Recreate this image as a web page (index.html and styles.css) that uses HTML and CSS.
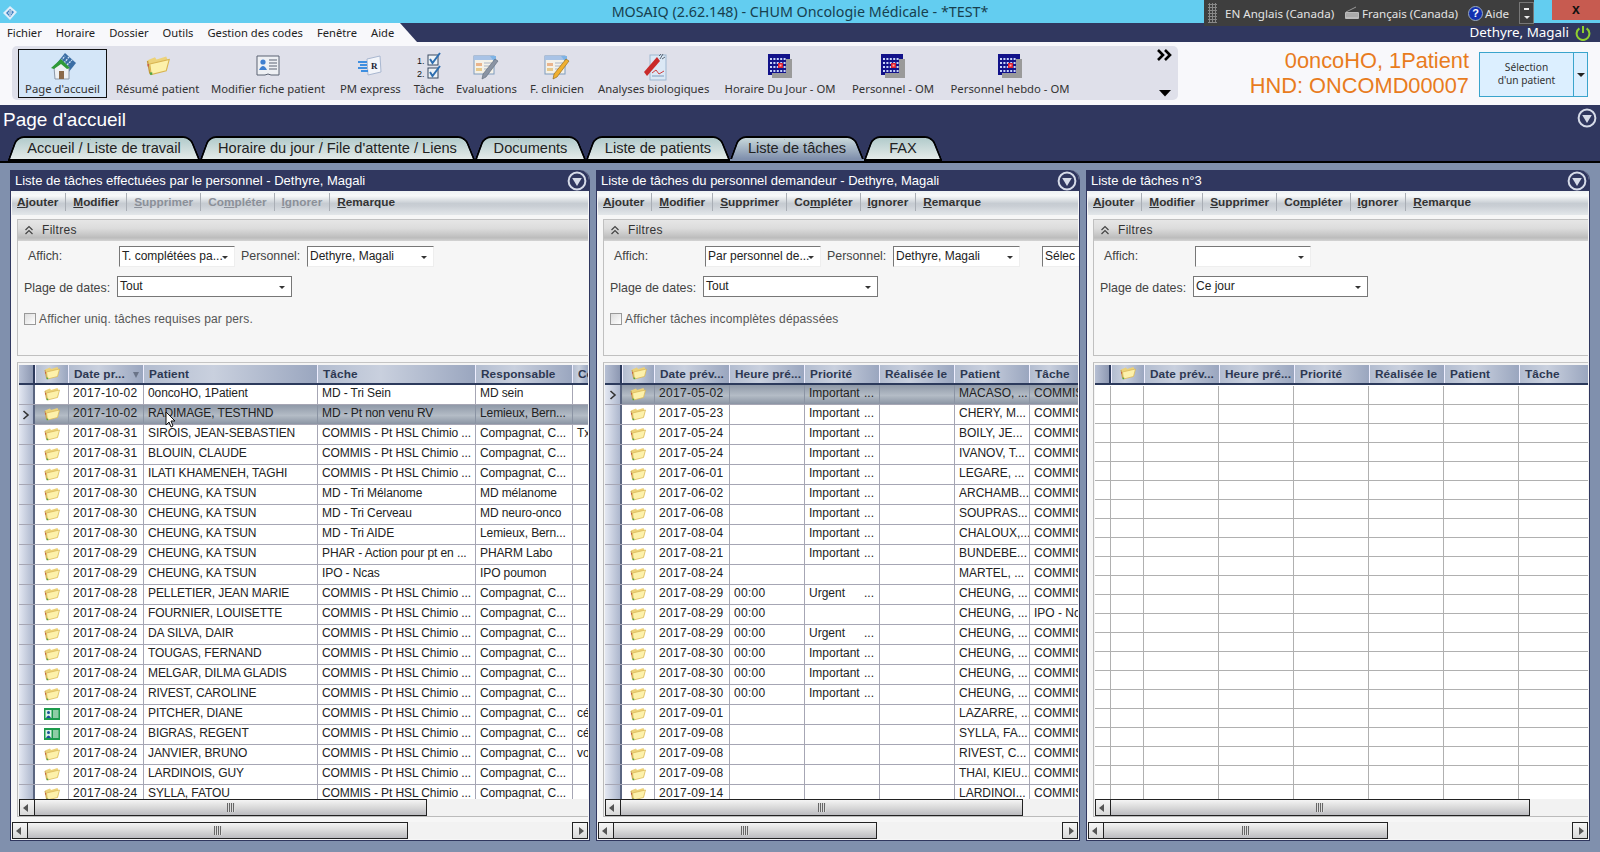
FILE: index.html
```html
<!DOCTYPE html>
<html lang="fr">
<head>
<meta charset="utf-8">
<title>MOSAIQ</title>
<link rel="stylesheet" href="styles.css">
</head>
<body>
<svg class="defs" width="0" height="0" aria-hidden="true">
  <symbol id="folder" viewBox="0 0 16 14">
    <path d="M1 3.5 L6 1.5 L7 3 L13.5 1 L14.5 3.5 L14 10 L3 13 Z" fill="#ecd27a"/>
    <path d="M2.5 6 L15.5 3 L13.5 10.5 L3.5 13 Z" fill="#fdf1ab" stroke="#d8b452" stroke-width=".7"/>
    <path d="M1 4 L2.6 12.5" stroke="#c49a3c" stroke-width=".9"/>
    <rect x="2.6" y="11.6" width="1.6" height="1.6" fill="#4ea545"/>
    <rect x="1" y="6" width="1" height="1.6" fill="#c8604a"/>
  </symbol>
  <symbol id="card" viewBox="0 0 16 12">
    <rect width="16" height="12" fill="#1c9a4c"/>
    <rect x="1.5" y="2" width="6" height="8" fill="#d9f3e3"/>
    <circle cx="4.5" cy="4.4" r="1.5" fill="#1b4d9a"/>
    <path d="M2 10 Q4.5 5 7 10 Z" fill="#1b4d9a"/>
    <path d="M9 3 H14.5 M9 5 H14.5 M9 7 H14.5 M9 9 H14.5" stroke="#fff" stroke-width="1"/>
  </symbol>
  <symbol id="cal" viewBox="0 0 26 26">
    <rect x="1" y="1" width="22" height="21" fill="#12128a"/>
    <rect x="19" y="6" width="6" height="19" fill="#9a9a9a"/>
    <rect x="5" y="20" width="20" height="5" fill="#9a9a9a"/>
    <path d="M3 6 h17 M3 10 h17 M3 14 h17 M3 18 h17" stroke="#c8d4f8" stroke-width="2" stroke-dasharray="2 1.4"/>
    <rect x="11" y="10" width="5" height="5" fill="#e02030"/>
    <rect x="12.5" y="11.5" width="2" height="2" fill="#ffb0a0"/>
  </symbol>
  <symbol id="round" viewBox="0 0 20 20">
    <circle cx="10" cy="10" r="8.4" fill="none" stroke="#d6dbe8" stroke-width="2"/>
    <path d="M5.2 7 H14.8 L10 15 Z" fill="#d6dbe8"/>
  </symbol>
  <symbol id="sheet" viewBox="0 0 28 28">
    <rect x="2" y="4" width="20" height="18" fill="#f4f1e8" stroke="#7f9bbd"/>
    <rect x="2" y="4" width="20" height="4" fill="#a9c3e6"/>
    <path d="M4 11 h6 v3 h-6 z" fill="#eab48c"/>
    <path d="M4 16 h6 v3 h-6 z" fill="#e6c98c"/>
    <path d="M12 11 h8 M12 14 h8 M12 17 h8" stroke="#a9b4c5"/>
    <path d="M18 4 h6 v8 z" fill="#7fb4e6"/>
  </symbol>
</svg>

<header class="titlebar">
  <svg class="app-ico" width="18" height="18" viewBox="0 0 18 18"><path d="M2 9 L9 2 L16 8 L9 16 Z" fill="#dfeefa"/><path d="M5 9 L9 5 L13 8 L9 13 Z" fill="#3f7fc0"/><path d="M7 9 h4 M8 7 h3 M8 11 h2" stroke="#fff"/></svg>
  <div class="app-title">MOSAIQ (2.62.148) - CHUM Oncologie Médicale - *TEST*</div>
  <div class="winctl">
    <span class="restore"></span>
    <span class="close">x</span>
  </div>
  <div class="langbar">
    <span class="grip"></span>
    <span class="lang l1">EN Anglais (Canada)</span>
    <svg class="kb" width="16" height="14" viewBox="0 0 16 14"><path d="M2 6 L12 1" stroke="#999" fill="none"/><rect x="1" y="6" width="14" height="7" rx="1" fill="#bbb"/><path d="M2.5 8 h11 M2.5 10 h11" stroke="#777" stroke-dasharray="1 1"/></svg>
    <span class="lang l2">Français (Canada)</span>
    <span class="help">?</span>
    <span class="lang">Aide</span>
    <span class="lbmin"><i></i><b></b></span>
  </div>
</header>

<nav class="navbar">
  <ul class="menu">
    <li>Fichier</li><li>Horaire</li><li>Dossier</li><li>Outils</li><li>Gestion des codes</li><li>Fenêtre</li><li>Aide</li>
  </ul>
  <div class="user">
    <span>Dethyre, Magali</span>
    <svg width="16" height="16" viewBox="0 0 16 16"><path d="M4.4 3.4 A6.4 6.4 0 1 0 11.6 3.4" fill="none" stroke="#8fd02f" stroke-width="2"/><path d="M8 1 V8" stroke="#8fd02f" stroke-width="2"/></svg>
  </div>
</nav>

<section class="ribbon">
  <div class="tools">
    <div class="tool active">
      <svg width="30" height="30" viewBox="0 0 30 30"><path d="M9 12 L17 2 L28 12 L20 22 Z" fill="#3b6ea5"/><path d="M13 10 L17 5 M16 12 L21 6 M19 14 L24 9" stroke="#cfe2f5" stroke-width="1.4" stroke-dasharray="2 1"/><path d="M6 16 L13 9 L21 16 V28 H7 Z" fill="#eef1f4" stroke="#8b98a8"/><path d="M3 17 L13 8 L22 17 L19 18 L13 13 L6 18 Z" fill="#2f9a38"/><rect x="11" y="20" width="5" height="8" fill="#8b6a4a"/></svg>
      <span>Page d'accueil</span>
    </div>
    <div class="tool t-res">
      <svg width="24" height="21" viewBox="0 0 16 14"><use href="#folder"/></svg>
      <span>Résumé patient</span>
    </div>
    <div class="tool t-mod">
      <svg width="26" height="26" viewBox="0 0 26 26"><path d="M2 3 H24 V22 H16 Q13 20 10 22 H2 Z" fill="#eef0f4" stroke="#5a6272"/><circle cx="8" cy="9" r="2.6" fill="#3f7fd0"/><path d="M4 17 Q8 9 12 17 Z" fill="#3f7fd0"/><path d="M14 7 H22 M14 10 H22 M14 13 H22 M14 16 H22" stroke="#5a6272"/></svg>
      <span>Modifier fiche patient</span>
    </div>
    <div class="tool t-pm">
      <svg width="26" height="26" viewBox="0 0 26 26"><path d="M10 6 L23 3 L24 19 L11 22 Z" fill="#f3f5fa" stroke="#a9b7d0"/><path d="M1 9 H10 M3 12 H10 M1 15 H10 M4 18 H11" stroke="#3f8fe0" stroke-width="2"/><text x="14" y="16" class="rx">R</text></svg>
      <span>PM express</span>
    </div>
    <div class="tool t-tache">
      <svg width="26" height="30" viewBox="0 0 26 30"><text x="1" y="13" class="num">1.</text><text x="1" y="26" class="num">2.</text><rect x="12" y="4" width="10" height="10" fill="#eef3f7" stroke="#3a4a60"/><rect x="12" y="17" width="10" height="10" fill="#eef3f7" stroke="#3a4a60"/><path d="M14 8 L16.5 12 L24 2" fill="none" stroke="#2f6fb0" stroke-width="2"/><path d="M14 21 L16.5 25 L24 15" fill="none" stroke="#2f6fb0" stroke-width="2"/></svg>
      <span>Tâche</span>
    </div>
    <div class="tool t-eval">
      <svg width="28" height="28" viewBox="0 0 28 28"><use href="#sheet"/><path d="M26 9 L14 25 L10 27 L11 22 L23 7 Z" fill="#8a94a4" stroke="#5c6675" stroke-width=".6"/></svg>
      <span>Evaluations</span>
    </div>
    <div class="tool t-fcl">
      <svg width="28" height="28" viewBox="0 0 28 28"><use href="#sheet"/><path d="M26 9 L14 25 L10 27 L11 22 L23 7 Z" fill="#f0b030" stroke="#8a6010" stroke-width=".6"/></svg>
      <span>F. clinicien</span>
    </div>
    <div class="tool t-ana">
      <svg width="30" height="30" viewBox="0 0 30 30"><rect x="11" y="4" width="16" height="25" fill="#dbe8f5" stroke="#9fb7d0"/><path d="M13 22 L17 19 L20 23 L25 20" stroke="#d04040" fill="none"/><path d="M13 25 H25" stroke="#7f9bbd"/><path d="M18 6 L5 21 L8 25 L21 10 Z" fill="#c92a2a"/><path d="M20 5 L22 3 M23 8 L26 6 M21 8 L24 3" stroke="#5c6675"/></svg>
      <span>Analyses biologiques</span>
    </div>
    <div class="tool t-hor">
      <svg width="26" height="26"><use href="#cal"/></svg>
      <span>Horaire Du Jour - OM</span>
    </div>
    <div class="tool t-per">
      <svg width="26" height="26"><use href="#cal"/></svg>
      <span>Personnel - OM</span>
    </div>
    <div class="tool t-heb">
      <svg width="26" height="26"><use href="#cal"/></svg>
      <span>Personnel hebdo - OM</span>
    </div>
    <div class="tool-more">
      <svg width="16" height="12" viewBox="0 0 16 12"><path d="M1 1 L6 6 L1 11 M8 1 L13 6 L8 11" fill="none" stroke="#000" stroke-width="2.6"/></svg>
      <svg width="14" height="8" viewBox="0 0 14 8"><path d="M1 1 H13 L7 7.6 Z" fill="#000"/></svg>
    </div>
  </div>
  <div class="patient">
    <div>0oncoHO, 1Patient</div>
    <div>HND: ONCOMD00007</div>
  </div>
  <div class="pick">
    <div class="pick-main">Sélection<br>d'un patient</div>
    <div class="pick-arrow"><i></i></div>
  </div>
</section>

<section class="pagehead">
  <div class="pagetitle">
    <h1>Page d'accueil</h1>
    <svg class="round-big" width="20" height="20"><use href="#round"/></svg>
  </div>
  <div class="tabs">
    <div class="tab t1"><span>Accueil / Liste de travail</span></div>
    <div class="tab t2"><span>Horaire du jour / File d'attente / Liens</span></div>
    <div class="tab t3"><span>Documents</span></div>
    <div class="tab t4"><span>Liste de patients</span></div>
    <div class="tab on t5"><span>Liste de tâches</span></div>
    <div class="tab t6"><span>FAX</span></div>
  </div>
</section>

<main class="panels">

  <article class="panel p1">
    <div class="ptitle"><span>Liste de tâches effectuées par le personnel - Dethyre, Magali</span><svg width="20" height="20"><use href="#round"/></svg></div>
    <div class="actions">
      <span><u>A</u>jouter</span><span><u>M</u>odifier</span><span class="off"><u>S</u>upprimer</span><span class="off">Co<u>m</u>pléter</span><span class="off"><u>I</u>gnorer</span><span><u>R</u>emarque</span>
    </div>
    <div class="filters">
      <div class="fhead"><svg width="10" height="10" viewBox="0 0 10 10"><path d="M1.5 5 L5 1.5 L8.5 5 M1.5 9 L5 5.5 L8.5 9" fill="none" stroke="#444" stroke-width="1.2"/></svg>Filtres</div>
      <div class="frow r1">
        <label class="laff">Affich:</label>
        <div class="combo c-aff sunk">T. complétées pa...</div>
        <label class="lper">Personnel:</label>
        <div class="combo c-per sunk">Dethyre, Magali</div>
      </div>
      <div class="frow r2">
        <label class="lpl">Plage de dates:</label>
        <div class="combo c-pl">Tout</div>
      </div>
      <div class="fcheck"><i></i>Afficher uniq. tâches requises par pers.</div>
    </div>
    <div class="grid">
      <div class="ghead">
        <span class="rh"></span>
        <span class="h ic"><svg class="fo"><use href="#folder"/></svg></span>
        <span class="h sort">Date pr...<i></i></span>
        <span class="h">Patient</span>
        <span class="h">Tâche</span>
        <span class="h">Responsable</span>
        <span class="h">Co</span>
      </div>
      <div class="gbody">
        <div class="row"><span class="rh"></span><span class="c ic"><svg class="fo"><use href="#folder"/></svg></span><span class="c">2017-10-02</span><span class="c">0oncoHO, 1Patient</span><span class="c">MD - Tri Sein</span><span class="c">MD sein</span><span class="c"></span></div>
        <div class="row sel"><span class="rh"><svg class="cv" width="8" height="10" viewBox="0 0 8 10"><path d="M1.5 1 L6 5 L1.5 9" fill="none" stroke="#333" stroke-width="1.6"/></svg></span><span class="c ic"><svg class="fo"><use href="#folder"/></svg></span><span class="c">2017-10-02</span><span class="c cursorcell">RADIMAGE, TESTHND<svg class="cursor" width="12" height="18" viewBox="0 0 12 18"><path d="M1 1 V14 L4 11 L6 16 L8 15 L6 10 L10 10 Z" fill="#fff" stroke="#111"/></svg></span><span class="c">MD - Pt non venu RV</span><span class="c">Lemieux, Bern...</span><span class="c"></span></div>
        <div class="row"><span class="rh"></span><span class="c ic"><svg class="fo"><use href="#folder"/></svg></span><span class="c">2017-08-31</span><span class="c">SIROIS, JEAN-SEBASTIEN</span><span class="c">COMMIS - Pt HSL Chimio ...</span><span class="c">Compagnat, C...</span><span class="c">Tx</span></div>
        <div class="row"><span class="rh"></span><span class="c ic"><svg class="fo"><use href="#folder"/></svg></span><span class="c">2017-08-31</span><span class="c">BLOUIN, CLAUDE</span><span class="c">COMMIS - Pt HSL Chimio ...</span><span class="c">Compagnat, C...</span><span class="c"></span></div>
        <div class="row"><span class="rh"></span><span class="c ic"><svg class="fo"><use href="#folder"/></svg></span><span class="c">2017-08-31</span><span class="c">ILATI KHAMENEH, TAGHI</span><span class="c">COMMIS - Pt HSL Chimio ...</span><span class="c">Compagnat, C...</span><span class="c"></span></div>
        <div class="row"><span class="rh"></span><span class="c ic"><svg class="fo"><use href="#folder"/></svg></span><span class="c">2017-08-30</span><span class="c">CHEUNG, KA TSUN</span><span class="c">MD - Tri Mélanome</span><span class="c">MD mélanome</span><span class="c"></span></div>
        <div class="row"><span class="rh"></span><span class="c ic"><svg class="fo"><use href="#folder"/></svg></span><span class="c">2017-08-30</span><span class="c">CHEUNG, KA TSUN</span><span class="c">MD - Tri Cerveau</span><span class="c">MD neuro-onco</span><span class="c"></span></div>
        <div class="row"><span class="rh"></span><span class="c ic"><svg class="fo"><use href="#folder"/></svg></span><span class="c">2017-08-30</span><span class="c">CHEUNG, KA TSUN</span><span class="c">MD - Tri AIDE</span><span class="c">Lemieux, Bern...</span><span class="c"></span></div>
        <div class="row"><span class="rh"></span><span class="c ic"><svg class="fo"><use href="#folder"/></svg></span><span class="c">2017-08-29</span><span class="c">CHEUNG, KA TSUN</span><span class="c">PHAR - Action pour pt en ...</span><span class="c">PHARM Labo</span><span class="c"></span></div>
        <div class="row"><span class="rh"></span><span class="c ic"><svg class="fo"><use href="#folder"/></svg></span><span class="c">2017-08-29</span><span class="c">CHEUNG, KA TSUN</span><span class="c">IPO - Ncas</span><span class="c">IPO poumon</span><span class="c"></span></div>
        <div class="row"><span class="rh"></span><span class="c ic"><svg class="fo"><use href="#folder"/></svg></span><span class="c">2017-08-28</span><span class="c">PELLETIER, JEAN MARIE</span><span class="c">COMMIS - Pt HSL Chimio ...</span><span class="c">Compagnat, C...</span><span class="c"></span></div>
        <div class="row"><span class="rh"></span><span class="c ic"><svg class="fo"><use href="#folder"/></svg></span><span class="c">2017-08-24</span><span class="c">FOURNIER, LOUISETTE</span><span class="c">COMMIS - Pt HSL Chimio ...</span><span class="c">Compagnat, C...</span><span class="c"></span></div>
        <div class="row"><span class="rh"></span><span class="c ic"><svg class="fo"><use href="#folder"/></svg></span><span class="c">2017-08-24</span><span class="c">DA SILVA, DAIR</span><span class="c">COMMIS - Pt HSL Chimio ...</span><span class="c">Compagnat, C...</span><span class="c"></span></div>
        <div class="row"><span class="rh"></span><span class="c ic"><svg class="fo"><use href="#folder"/></svg></span><span class="c">2017-08-24</span><span class="c">TOUGAS, FERNAND</span><span class="c">COMMIS - Pt HSL Chimio ...</span><span class="c">Compagnat, C...</span><span class="c"></span></div>
        <div class="row"><span class="rh"></span><span class="c ic"><svg class="fo"><use href="#folder"/></svg></span><span class="c">2017-08-24</span><span class="c">MELGAR, DILMA GLADIS</span><span class="c">COMMIS - Pt HSL Chimio ...</span><span class="c">Compagnat, C...</span><span class="c"></span></div>
        <div class="row"><span class="rh"></span><span class="c ic"><svg class="fo"><use href="#folder"/></svg></span><span class="c">2017-08-24</span><span class="c">RIVEST, CAROLINE</span><span class="c">COMMIS - Pt HSL Chimio ...</span><span class="c">Compagnat, C...</span><span class="c"></span></div>
        <div class="row"><span class="rh"></span><span class="c ic"><svg class="cd"><use href="#card"/></svg></span><span class="c">2017-08-24</span><span class="c">PITCHER, DIANE</span><span class="c">COMMIS - Pt HSL Chimio ...</span><span class="c">Compagnat, C...</span><span class="c">cé</span></div>
        <div class="row"><span class="rh"></span><span class="c ic"><svg class="cd"><use href="#card"/></svg></span><span class="c">2017-08-24</span><span class="c">BIGRAS, REGENT</span><span class="c">COMMIS - Pt HSL Chimio ...</span><span class="c">Compagnat, C...</span><span class="c">cé</span></div>
        <div class="row"><span class="rh"></span><span class="c ic"><svg class="fo"><use href="#folder"/></svg></span><span class="c">2017-08-24</span><span class="c">JANVIER, BRUNO</span><span class="c">COMMIS - Pt HSL Chimio ...</span><span class="c">Compagnat, C...</span><span class="c">vo</span></div>
        <div class="row"><span class="rh"></span><span class="c ic"><svg class="fo"><use href="#folder"/></svg></span><span class="c">2017-08-24</span><span class="c">LARDINOIS, GUY</span><span class="c">COMMIS - Pt HSL Chimio ...</span><span class="c">Compagnat, C...</span><span class="c"></span></div>
        <div class="row"><span class="rh"></span><span class="c ic"><svg class="fo"><use href="#folder"/></svg></span><span class="c">2017-08-24</span><span class="c">SYLLA, FATOU</span><span class="c">COMMIS - Pt HSL Chimio ...</span><span class="c">Compagnat, C...</span><span class="c"></span></div>
      </div>
      <div class="sb inner"><span class="btn l"></span><span class="thumb"><i></i></span></div>
    </div>
    <div class="sb outer"><span class="btn l"></span><span class="thumb"><i></i></span><span class="rest"></span><span class="btn r"></span></div>
  </article>

  <article class="panel p2">
    <div class="ptitle"><span>Liste de tâches du personnel demandeur - Dethyre, Magali</span><svg width="20" height="20"><use href="#round"/></svg></div>
    <div class="actions">
      <span><u>A</u>jouter</span><span><u>M</u>odifier</span><span><u>S</u>upprimer</span><span>Co<u>m</u>pléter</span><span><u>I</u>gnorer</span><span><u>R</u>emarque</span>
    </div>
    <div class="filters">
      <div class="fhead"><svg width="10" height="10" viewBox="0 0 10 10"><path d="M1.5 5 L5 1.5 L8.5 5 M1.5 9 L5 5.5 L8.5 9" fill="none" stroke="#444" stroke-width="1.2"/></svg>Filtres</div>
      <div class="frow r1">
        <label class="laff">Affich:</label>
        <div class="combo c-aff sunk">Par personnel de...</div>
        <label class="lper">Personnel:</label>
        <div class="combo c-per sunk">Dethyre, Magali</div>
        <div class="combo c-sel sunk">Sélec</div>
      </div>
      <div class="frow r2">
        <label class="lpl">Plage de dates:</label>
        <div class="combo c-pl">Tout</div>
      </div>
      <div class="fcheck"><i></i>Afficher tâches incomplètes dépassées</div>
    </div>
    <div class="grid">
      <div class="ghead">
        <span class="rh"></span>
        <span class="h ic"><svg class="fo"><use href="#folder"/></svg></span>
        <span class="h">Date prév...</span><span class="h">Heure pré...</span><span class="h">Priorité</span><span class="h">Réalisée le</span><span class="h">Patient</span><span class="h">Tâche</span>
      </div>
      <div class="gbody">
        <div class="row sel"><span class="rh"><svg class="cv" width="8" height="10" viewBox="0 0 8 10"><path d="M1.5 1 L6 5 L1.5 9" fill="none" stroke="#333" stroke-width="1.6"/></svg></span><span class="c ic"><svg class="fo"><use href="#folder"/></svg></span><span class="c">2017-05-02</span><span class="c"></span><span class="c pr">Important<em>...</em></span><span class="c"></span><span class="c">MACASO, ...</span><span class="c">COMMIS</span></div>
        <div class="row"><span class="rh"></span><span class="c ic"><svg class="fo"><use href="#folder"/></svg></span><span class="c">2017-05-23</span><span class="c"></span><span class="c pr">Important<em>...</em></span><span class="c"></span><span class="c">CHERY, M...</span><span class="c">COMMIS</span></div>
        <div class="row"><span class="rh"></span><span class="c ic"><svg class="fo"><use href="#folder"/></svg></span><span class="c">2017-05-24</span><span class="c"></span><span class="c pr">Important<em>...</em></span><span class="c"></span><span class="c">BOILY, JE...</span><span class="c">COMMIS</span></div>
        <div class="row"><span class="rh"></span><span class="c ic"><svg class="fo"><use href="#folder"/></svg></span><span class="c">2017-05-24</span><span class="c"></span><span class="c pr">Important<em>...</em></span><span class="c"></span><span class="c">IVANOV, T...</span><span class="c">COMMIS</span></div>
        <div class="row"><span class="rh"></span><span class="c ic"><svg class="fo"><use href="#folder"/></svg></span><span class="c">2017-06-01</span><span class="c"></span><span class="c pr">Important<em>...</em></span><span class="c"></span><span class="c">LEGARE, ...</span><span class="c">COMMIS</span></div>
        <div class="row"><span class="rh"></span><span class="c ic"><svg class="fo"><use href="#folder"/></svg></span><span class="c">2017-06-02</span><span class="c"></span><span class="c pr">Important<em>...</em></span><span class="c"></span><span class="c">ARCHAMB...</span><span class="c">COMMIS</span></div>
        <div class="row"><span class="rh"></span><span class="c ic"><svg class="fo"><use href="#folder"/></svg></span><span class="c">2017-06-08</span><span class="c"></span><span class="c pr">Important<em>...</em></span><span class="c"></span><span class="c">SOUPRAS...</span><span class="c">COMMIS</span></div>
        <div class="row"><span class="rh"></span><span class="c ic"><svg class="fo"><use href="#folder"/></svg></span><span class="c">2017-08-04</span><span class="c"></span><span class="c pr">Important<em>...</em></span><span class="c"></span><span class="c">CHALOUX,...</span><span class="c">COMMIS</span></div>
        <div class="row"><span class="rh"></span><span class="c ic"><svg class="fo"><use href="#folder"/></svg></span><span class="c">2017-08-21</span><span class="c"></span><span class="c pr">Important<em>...</em></span><span class="c"></span><span class="c">BUNDEBE...</span><span class="c">COMMIS</span></div>
        <div class="row"><span class="rh"></span><span class="c ic"><svg class="fo"><use href="#folder"/></svg></span><span class="c">2017-08-24</span><span class="c"></span><span class="c"></span><span class="c"></span><span class="c">MARTEL, ...</span><span class="c">COMMIS</span></div>
        <div class="row"><span class="rh"></span><span class="c ic"><svg class="fo"><use href="#folder"/></svg></span><span class="c">2017-08-29</span><span class="c">00:00</span><span class="c pr">Urgent<em>...</em></span><span class="c"></span><span class="c">CHEUNG, ...</span><span class="c">COMMIS</span></div>
        <div class="row"><span class="rh"></span><span class="c ic"><svg class="fo"><use href="#folder"/></svg></span><span class="c">2017-08-29</span><span class="c">00:00</span><span class="c"></span><span class="c"></span><span class="c">CHEUNG, ...</span><span class="c">IPO - Ncas</span></div>
        <div class="row"><span class="rh"></span><span class="c ic"><svg class="fo"><use href="#folder"/></svg></span><span class="c">2017-08-29</span><span class="c">00:00</span><span class="c pr">Urgent<em>...</em></span><span class="c"></span><span class="c">CHEUNG, ...</span><span class="c">COMMIS</span></div>
        <div class="row"><span class="rh"></span><span class="c ic"><svg class="fo"><use href="#folder"/></svg></span><span class="c">2017-08-30</span><span class="c">00:00</span><span class="c pr">Important<em>...</em></span><span class="c"></span><span class="c">CHEUNG, ...</span><span class="c">COMMIS</span></div>
        <div class="row"><span class="rh"></span><span class="c ic"><svg class="fo"><use href="#folder"/></svg></span><span class="c">2017-08-30</span><span class="c">00:00</span><span class="c pr">Important<em>...</em></span><span class="c"></span><span class="c">CHEUNG, ...</span><span class="c">COMMIS</span></div>
        <div class="row"><span class="rh"></span><span class="c ic"><svg class="fo"><use href="#folder"/></svg></span><span class="c">2017-08-30</span><span class="c">00:00</span><span class="c pr">Important<em>...</em></span><span class="c"></span><span class="c">CHEUNG, ...</span><span class="c">COMMIS</span></div>
        <div class="row"><span class="rh"></span><span class="c ic"><svg class="fo"><use href="#folder"/></svg></span><span class="c">2017-09-01</span><span class="c"></span><span class="c"></span><span class="c"></span><span class="c">LAZARRE, ...</span><span class="c">COMMIS</span></div>
        <div class="row"><span class="rh"></span><span class="c ic"><svg class="fo"><use href="#folder"/></svg></span><span class="c">2017-09-08</span><span class="c"></span><span class="c"></span><span class="c"></span><span class="c">SYLLA, FA...</span><span class="c">COMMIS</span></div>
        <div class="row"><span class="rh"></span><span class="c ic"><svg class="fo"><use href="#folder"/></svg></span><span class="c">2017-09-08</span><span class="c"></span><span class="c"></span><span class="c"></span><span class="c">RIVEST, C...</span><span class="c">COMMIS</span></div>
        <div class="row"><span class="rh"></span><span class="c ic"><svg class="fo"><use href="#folder"/></svg></span><span class="c">2017-09-08</span><span class="c"></span><span class="c"></span><span class="c"></span><span class="c">THAI, KIEU...</span><span class="c">COMMIS</span></div>
        <div class="row"><span class="rh"></span><span class="c ic"><svg class="fo"><use href="#folder"/></svg></span><span class="c">2017-09-14</span><span class="c"></span><span class="c"></span><span class="c"></span><span class="c">LARDINOI...</span><span class="c">COMMIS</span></div>
      </div>
      <div class="sb inner"><span class="btn l"></span><span class="thumb"><i></i></span></div>
    </div>
    <div class="sb outer"><span class="btn l"></span><span class="thumb"><i></i></span><span class="rest"></span><span class="btn r"></span></div>
  </article>

  <article class="panel p3">
    <div class="ptitle"><span>Liste de tâches n°3</span><svg width="20" height="20"><use href="#round"/></svg></div>
    <div class="actions">
      <span><u>A</u>jouter</span><span><u>M</u>odifier</span><span><u>S</u>upprimer</span><span>Co<u>m</u>pléter</span><span><u>I</u>gnorer</span><span><u>R</u>emarque</span>
    </div>
    <div class="filters">
      <div class="fhead"><svg width="10" height="10" viewBox="0 0 10 10"><path d="M1.5 5 L5 1.5 L8.5 5 M1.5 9 L5 5.5 L8.5 9" fill="none" stroke="#444" stroke-width="1.2"/></svg>Filtres</div>
      <div class="frow r1">
        <label class="laff">Affich:</label>
        <div class="combo c-aff sunk"></div>
      </div>
      <div class="frow r2">
        <label class="lpl">Plage de dates:</label>
        <div class="combo c-pl">Ce jour</div>
      </div>
    </div>
    <div class="grid">
      <div class="ghead">
        <span class="rh"></span>
        <span class="h ic"><svg class="fo"><use href="#folder"/></svg></span>
        <span class="h">Date prév...</span><span class="h">Heure pré...</span><span class="h">Priorité</span><span class="h">Réalisée le</span><span class="h">Patient</span><span class="h">Tâche</span>
      </div>
      <div class="gbody">
        <div class="row"><span></span><span></span><span></span><span></span><span></span><span></span><span></span><span></span></div>
        <div class="row"><span></span><span></span><span></span><span></span><span></span><span></span><span></span><span></span></div>
        <div class="row"><span></span><span></span><span></span><span></span><span></span><span></span><span></span><span></span></div>
        <div class="row"><span></span><span></span><span></span><span></span><span></span><span></span><span></span><span></span></div>
        <div class="row"><span></span><span></span><span></span><span></span><span></span><span></span><span></span><span></span></div>
        <div class="row"><span></span><span></span><span></span><span></span><span></span><span></span><span></span><span></span></div>
        <div class="row"><span></span><span></span><span></span><span></span><span></span><span></span><span></span><span></span></div>
        <div class="row"><span></span><span></span><span></span><span></span><span></span><span></span><span></span><span></span></div>
        <div class="row"><span></span><span></span><span></span><span></span><span></span><span></span><span></span><span></span></div>
        <div class="row"><span></span><span></span><span></span><span></span><span></span><span></span><span></span><span></span></div>
        <div class="row"><span></span><span></span><span></span><span></span><span></span><span></span><span></span><span></span></div>
        <div class="row"><span></span><span></span><span></span><span></span><span></span><span></span><span></span><span></span></div>
        <div class="row"><span></span><span></span><span></span><span></span><span></span><span></span><span></span><span></span></div>
        <div class="row"><span></span><span></span><span></span><span></span><span></span><span></span><span></span><span></span></div>
        <div class="row"><span></span><span></span><span></span><span></span><span></span><span></span><span></span><span></span></div>
        <div class="row"><span></span><span></span><span></span><span></span><span></span><span></span><span></span><span></span></div>
        <div class="row"><span></span><span></span><span></span><span></span><span></span><span></span><span></span><span></span></div>
        <div class="row"><span></span><span></span><span></span><span></span><span></span><span></span><span></span><span></span></div>
        <div class="row"><span></span><span></span><span></span><span></span><span></span><span></span><span></span><span></span></div>
        <div class="row"><span></span><span></span><span></span><span></span><span></span><span></span><span></span><span></span></div>
        <div class="row"><span></span><span></span><span></span><span></span><span></span><span></span><span></span><span></span></div>
        <div class="row"><span></span><span></span><span></span><span></span><span></span><span></span><span></span><span></span></div>
      </div>
      <div class="sb inner"><span class="btn l"></span><span class="thumb"><i></i></span></div>
    </div>
    <div class="sb outer"><span class="btn l"></span><span class="thumb"><i></i></span><span class="rest"></span><span class="btn r"></span></div>
  </article>

</main>
</body>
</html>
```
FILE: styles.css
```css
* { box-sizing: border-box; }
html, body { margin: 0; height: 100%; }
body {
  width: 1600px; height: 852px; overflow: hidden;
  display: flex; flex-direction: column;
  background: #8090ad;
  font-family: "Liberation Sans", Arial, sans-serif;
  color: #222;
}
.defs { position: absolute; }

/* Title bar */
.titlebar {
  height: 23px; flex: none; position: relative;
  display: flex; align-items: center; justify-content: center;
  background: #63cdf0;
}
.app-ico { position: absolute; left: 1px; top: 4px; }
.app-title { font: 14.3px "Noto Sans", sans-serif; color: #17404f; }
.winctl { position: absolute; right: 0; top: 0; display: flex; height: 20px; }
.restore { width: 66px; position: relative; }
.restore::after { content: ""; position: absolute; left: 0; top: 5px; width: 8px; height: 9px; border: 2px solid #111; }
.close { width: 48px; background: #c75b50; color: #111; font: bold 14px/18px "Liberation Sans", sans-serif; text-align: center; }
.langbar {
  position: absolute; left: 1204px; top: 0; width: 330px; height: 26px;
  display: flex; align-items: center;
  background: #3e3e3e; color: #e4e4e4; padding-left: 4px;
  font: 11.6px "Noto Sans", sans-serif;
}
.grip {
  width: 9px; height: 20px; margin-right: 8px;
  background: radial-gradient(circle, #888 1px, transparent 1.2px) 0 0 / 3px 3px;
}
.lang { white-space: nowrap; }
.l1 { width: 119px; }
.kb { margin-right: 2px; }
.l2 { width: 106px; }
.help {
  width: 15px; height: 15px; border-radius: 50%; background: #1430b0; color: #fff;
  font: bold 11px/13px "Liberation Sans", sans-serif; text-align: center; margin-right: 2px; border: 1px solid #9ab;
}
.lbmin { position: absolute; right: 0; top: 2px; width: 15px; height: 22px; border: 1px solid #777; display: flex; flex-direction: column; align-items: center; }
.lbmin i { width: 5px; height: 2px; background: #eee; margin-top: 5px; }
.lbmin b { width: 0; height: 0; border: 3px solid transparent; border-top-color: #eee; margin-top: 6px; }

/* Navigation */
.navbar { height: 19px; flex: none; background: #30375f; display: flex; justify-content: space-between; }
.menu {
  list-style: none; margin: 0; padding: 0 0 0 7px; width: 417px;
  display: flex; gap: 14px; align-items: center; white-space: nowrap;
  background: #f8f8fb; color: #222;
  font: 11.2px "Noto Sans", sans-serif;
  clip-path: polygon(0 0, 400px 0, 100% 100%, 0 100%);
}
.user { display: flex; align-items: center; gap: 6px; padding-right: 9px; color: #fff; font: 13.4px/19px "Noto Sans", sans-serif; }

/* Ribbon */
.ribbon { height: 63px; flex: none; background: #f8f8fb; display: flex; align-items: flex-start; position: relative; }
.tools {
  margin: 4px 0 0 12px; width: 1166px; height: 54px; flex: none;
  display: flex; padding-left: 6px; padding-top: 3px;
  background: #dfe0ea; border-radius: 5px;
  position: relative;
}
.tool {
  height: 49px; flex: none;
  display: grid; grid-template-rows: 33px 14px; justify-items: center; align-items: center;
  font: 11.3px/14px "Noto Sans", sans-serif; color: #333; white-space: nowrap;
}
.tool.active { width: 89px; background: #d4e6f8; box-shadow: inset 0 0 0 1px #111; }
.t-res { width: 81px; margin-left: 9px; }
.t-mod { width: 114px; margin-left: 14px; }
.t-pm { width: 60px; margin-left: 15px; }
.t-tache { width: 32px; margin-left: 13px; }
.t-eval { width: 60px; margin-left: 11px; }
.t-fcl { width: 56px; margin-left: 13px; }
.t-ana { width: 111px; margin-left: 13px; }
.t-hor { width: 112px; margin-left: 15px; }
.t-per { width: 82px; margin-left: 16px; }
.t-heb { width: 120px; margin-left: 16px; }
.rx { font: bold 9px "Liberation Serif", serif; fill: #223; }
.num { font: 9px "Liberation Sans", sans-serif; fill: #111; }
.tool-more {
  position: absolute; right: 5px; top: 3px; bottom: 3px; width: 16px;
  display: flex; flex-direction: column; justify-content: space-between; align-items: center;
}
.patient {
  width: 291px; flex: none; text-align: right; color: #e87c1e;
  font-size: 21.8px; line-height: 25px; padding-top: 6px; white-space: nowrap;
}
.pick {
  margin: 10px 0 0 10px; width: 109px; height: 45px; flex: none;
  display: flex; background: #dcefff; border: 1px solid #3aa4cc;
}
.pick-main { flex: 1; text-align: center; font: 10.2px/13px "Noto Sans", sans-serif; color: #333; padding-top: 8px; border-right: 1px solid #3aa4cc; }
.pick-arrow { width: 13px; display: flex; align-items: center; justify-content: center; }
.pick-arrow i { border: 4px solid transparent; border-top-color: #222; border-bottom: 0; }

/* Page head & tabs */
.pagehead { height: 58px; flex: none; background: #30375f; display: flex; flex-direction: column; border-bottom: 2px solid #000; }
.pagetitle { height: 31px; display: flex; justify-content: space-between; padding: 2px 3px 0 3px; }
.pagetitle h1 { margin: 0; font: 19px/25px "Liberation Sans", sans-serif; color: #fff; }
.round-big { margin-top: 1px; }
.tabs { display: flex; height: 25px; padding-left: 8px; align-items: stretch; margin-bottom: -2px; position: relative; }
.tab { position: relative; display: flex; align-items: center; justify-content: center; font-size: 14.6px; color: #222; white-space: nowrap; border-bottom: 2px solid #000; }
.tab span { position: relative; z-index: 1; }
.tab::before, .tab::after {
  content: ""; position: absolute; top: 0; bottom: 0; width: 52%;
  background: linear-gradient(#b2cbcb, #e4eae9);
  border-top: 2px solid #000;
}
.tab::before { left: 0; transform: skewX(-20deg); transform-origin: bottom left; border-left: 2px solid #000; border-radius: 8px 0 0 0; }
.tab::after { right: 0; transform: skewX(22deg); transform-origin: bottom right; border-right: 2px solid #000; border-radius: 0 8px 0 0; }
.tab.on { border-bottom-color: #8090ad; }
.tab.on::before, .tab.on::after { background: linear-gradient(#c8d8da, #8090ad); }
.t1 { width: 192px; }
.t2 { width: 275px; }
.t3 { width: 111px; }
.t4 { width: 144px; }
.t5 { width: 134px; }
.t6 { width: 78px; }

/* Panels */
.panels { flex: 1; display: flex; gap: 6px; padding: 7px 10px 12px; min-height: 0; }
.panel {
  display: flex; flex-direction: column; height: 671px; flex: none;
  background: #f6f6f6; border: 1px solid #30375f; border-top: 0; padding: 0 1px 1px;
  overflow: hidden; border-radius: 0 10px 0 0;
}
.p1 { width: 580px; --cols: 16px 33px 75px 174px 158px 97px 1fr; }
.p2 { width: 484px; --cols: 17px 32px 75px 75px 75px 75px 75px 1fr; }
.p3 { width: 504px; --cols: 16px 33px 75px 75px 75px 75px 75px 1fr; }
.ptitle {
  height: 21px; flex: none; margin: 0 -1px; padding: 0 2px 0 4px;
  display: flex; justify-content: space-between; align-items: center;
  background: #30375f; color: #fff; font-size: 13px; white-space: nowrap;
}
.actions {
  height: 24px; flex: none; display: flex; align-items: center; padding-bottom: 3px;
  background: linear-gradient(#eef2f4 0, #f7f9fa 20%, #c6ccd2 52%, #c9ced4 62%, #e3e7ea 100%);
  font-size: 11.8px; font-weight: bold; color: #333;
}
.actions span { padding: 0 7px 0 5px; border-right: 1px solid #a9aeb5; line-height: 18px; margin-right: 2px; white-space: nowrap; }
.actions span:last-child { border-right: 0; }
.actions .off { color: #8b9099; }

.filters { height: 137px; flex: none; margin: 4px 0 0 5px; border: 1px solid #c0c0c0; border-right: 0; background: #f6f6f6; }
.fhead {
  height: 21px; display: flex; align-items: center; gap: 8px; padding: 0 0 2px 6px;
  background: linear-gradient(#e6e6e6, #dcdcdc 40%, #bcbcbc 85%, #d4d4d4);
  font-size: 12px; color: #333; letter-spacing: .3px;
}
.frow { display: flex; align-items: center; height: 21px; white-space: nowrap; font-size: 12.4px; color: #444; }
.frow label { flex: none; }
.r1 { margin-top: 5px; }
.r2 { margin-top: 9px; }
.laff { width: 91px; margin-left: 10px; padding-bottom: 2px; }
.lpl { width: 93px; margin-left: 6px; padding-top: 2px; }
.lper { width: 66px; margin-left: 6px; padding-bottom: 2px; }
.combo {
  height: 21px; flex: none; position: relative; background: #fff;
  border: 1px solid #777; font-size: 12px; color: #222; line-height: 18px; padding-left: 2px; white-space: nowrap; overflow: hidden;
}
.combo::after {
  content: ""; position: absolute; right: 6px; top: 9px;
  border: 3px solid transparent; border-top-color: #333; border-bottom: 0;
}
.combo.sunk { border-color: #777 #eee #eee #777; line-height: 19px; }
.c-aff { width: 116px; }
.c-per { width: 127px; }
.c-pl { width: 175px; }
.c-sel { width: 60px; margin-left: 22px; }
.c-sel::after { display: none; }
.fcheck { display: flex; align-items: center; gap: 3px; margin: 15px 0 0 6px; font-size: 12px; color: #555; letter-spacing: .15px; white-space: nowrap; }
.fcheck i { width: 12px; height: 12px; border: 1px solid #999; background: linear-gradient(135deg, #ddd, #fff); }

/* Grid */
.grid { height: 455px; flex: none; margin: 6px 0 0 5px; border-top: 1px solid #c4c4c4; border-left: 1px solid #bbb; border-bottom: 1px solid #bbb; padding: 2px 0 0 1px; overflow: hidden; background: #f4f4f4; }
.ghead, .row { display: grid; grid-template-columns: var(--cols); }
.ghead { height: 20px; border-bottom: 2px solid #2c3a5c; font-size: 11.8px; font-weight: bold; color: #2d3852; }
.h {
  background: linear-gradient(90deg, #b3bdd0, #c9d0de 40%, #9aa6bf 100%);
  border-left: 1px solid #eef; padding-left: 5px; line-height: 18px; white-space: nowrap; overflow: hidden; position: relative; letter-spacing: .1px;
}
.ghead .rh { background: linear-gradient(90deg, #b7c0d4, #8d98b2); border-right: 2px solid #2c3a5c; }
.sort i { position: absolute; right: 4px; top: 7px; border: 3.5px solid transparent; border-top: 6px solid #6a7488; border-bottom: 0; }
.gbody { height: 414px; background: #fff; overflow: hidden; }
.row { height: 20px; border-bottom: 1px solid #a6a6b4; font-size: 12px; line-height: 17px; }
.c { padding-left: 4px; border-left: 1px solid #a6a6b4; white-space: nowrap; overflow: hidden; color: #222; min-width: 0; }
.p1 .c { letter-spacing: -.1px; }
.row .c:nth-child(3) { letter-spacing: .3px; }
.p2 .row .c:nth-child(4) { letter-spacing: .3px; }
.row .rh { background: linear-gradient(90deg, #e4e8f2, #adb7cd); border-right: 2px solid #5a6580; display: flex; align-items: center; justify-content: center; }
.row .c:nth-child(2) { border-left: 0; }
.ic { display: flex; align-items: center; justify-content: center; padding: 0 0 2px; }
.fo { width: 16px; height: 14px; }
.cd { width: 16px; height: 12px; }
.sel { background: linear-gradient(#8f99a8, #b4bcc6 55%, #8b95a4); }
.sel .c { border-left-color: #8a93a3; }
.pr { display: flex; justify-content: space-between; padding-right: 5px; }
.pr em { font-style: normal; }
.cursorcell { position: relative; overflow: visible; }
.cursor { position: absolute; left: 21px; top: 6px; z-index: 2; }
.p3 .gbody { padding-top: 1px; }
.p3 .row { height: 19px; border-bottom-color: #b0b0b0; }
.p3 .row span { border-right: 1px solid #b0b0b0; }
.p3 .row span:last-child { border-right: 0; }

/* Scrollbars */
.sb { height: 17px; display: flex; flex: none; background: #f2f2f2; }
.btn { width: 16px; flex: none; border: 1px solid #222; position: relative; background: linear-gradient(#f6f6f6, #d8d8d8); }
.btn::after { content: ""; position: absolute; top: 4px; border: 4px solid transparent; }
.btn.l::after { left: 3px; border-right: 5px solid #555; border-left: 0; }
.btn.r::after { right: 3px; border-left: 5px solid #555; border-right: 0; }
.thumb { flex: none; border: 1px solid #222; border-left: 0; position: relative; background: linear-gradient(#f4f4f4, #dcdcdc 45%, #bcbcc0); }
.thumb i { position: absolute; left: 50%; top: 3px; width: 8px; height: 9px; margin-left: -4px; background: repeating-linear-gradient(90deg, #666 0 1px, #ddd 1px 2px); }
.rest { flex: 1; }
.outer { margin-top: 5px; }
.p1 .inner .thumb { width: 392px; }
.p2 .inner .thumb { width: 402px; }
.p3 .inner .thumb { width: 419px; }
.p1 .outer .thumb { width: 380px; }
.p2 .outer .thumb { width: 263px; }
.p3 .outer .thumb { width: 284px; }
```
